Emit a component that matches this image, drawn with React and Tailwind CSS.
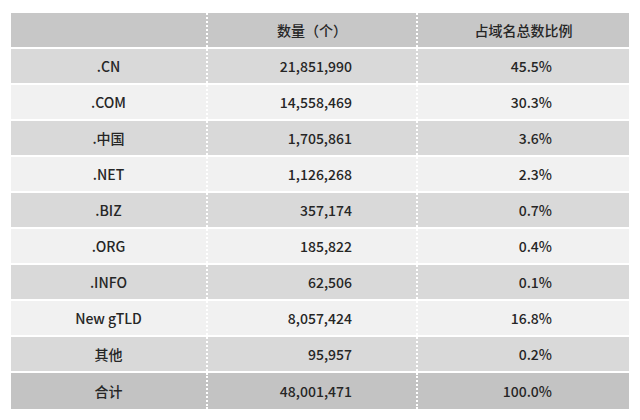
const rows = [
  { name: ".CN", count: "21,851,990", share: "45.5%" },
  { name: ".COM", count: "14,558,469", share: "30.3%" },
  { name: ".中国", count: "1,705,861", share: "3.6%" },
  { name: ".NET", count: "1,126,268", share: "2.3%" },
  { name: ".BIZ", count: "357,174", share: "0.7%" },
  { name: ".ORG", count: "185,822", share: "0.4%" },
  { name: ".INFO", count: "62,506", share: "0.1%" },
  { name: "New gTLD", count: "8,057,424", share: "16.8%" },
  { name: "其他", count: "95,957", share: "0.2%" },
]

function Row({ bg, cells, header, last }) {
  return (
    <div
      className={`grid grid-cols-[197px_210px_1fr] h-[36px] ${last ? "" : "border-b-2 border-white"} ${bg}`}
    >
      <div className="flex items-center justify-center border-r-2 border-dotted border-white">
        {cells[0]}
      </div>
      <div
        className={`flex items-center border-r-2 border-dotted border-white ${
          header ? "justify-center" : "justify-end pr-[64px]"
        }`}
      >
        {cells[1]}
      </div>
      <div className={`flex items-center ${header ? "justify-center" : "justify-end pr-[77px]"}`}>
        {cells[2]}
      </div>
    </div>
  )
}

export default function App() {
  return (
    <div
      className="w-[640px] h-[420px] bg-white pt-[13px] pl-[11px] text-[14px] font-medium text-[#262626]"
      style={{ fontFamily: '"Noto Sans CJK SC", "Noto Sans", sans-serif' }}
    >
      <div className="w-[618px]">
        <Row bg="bg-[#c7c7c7]" header cells={["", "数量（个）", "占域名总数比例"]} />
        {rows.map((r, i) => (
          <Row
            key={r.name}
            bg={i % 2 === 0 ? "bg-[#d9d9d9]" : "bg-[#f1f1f1]"}
            cells={[r.name, r.count, r.share]}
          />
        ))}
        <Row bg="bg-[#c3c3c3]" last cells={["合计", "48,001,471", "100.0%"]} />
      </div>
    </div>
  )
}
